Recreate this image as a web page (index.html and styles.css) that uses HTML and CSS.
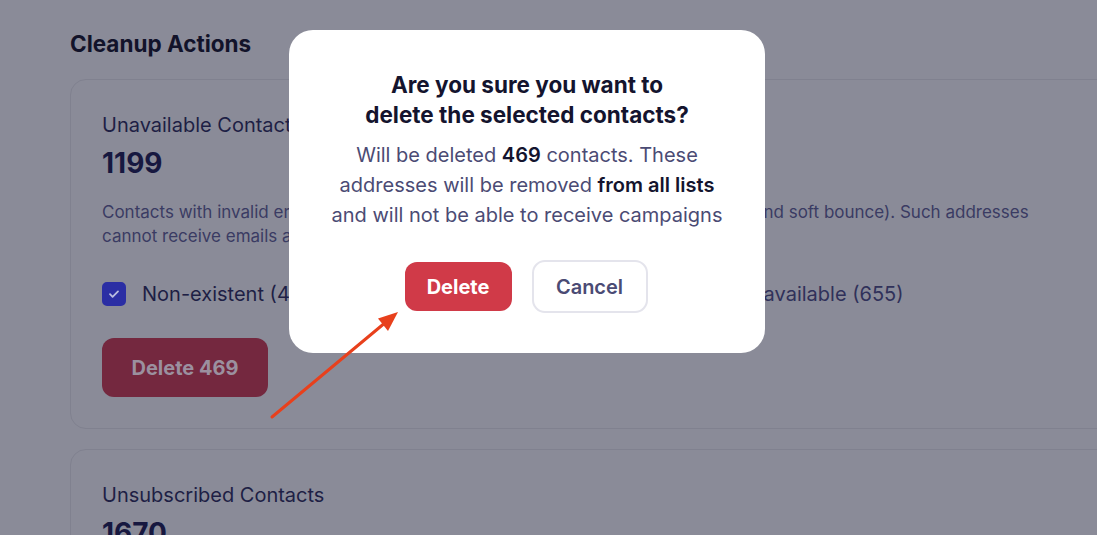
FILE: index.html
```html
<!DOCTYPE html>
<html>
<head>
<meta charset="utf-8">
<link rel="stylesheet" href="styles.css">
</head>
<body>
<div class="page">
  <h2 class="section-title">Cleanup Actions</h2>
  <div class="card">
    <h3 class="card-title">Unavailable Contacts</h3>
    <div class="card-count">1199</div>
    <p class="card-desc">Contacts with invalid email addresses or those that returned errors (hard bounce and soft bounce). Such addresses cannot receive emails and reduce your sender reputation.</p>
    <div class="options">
      <label class="option">
        <span class="checkbox checked"><svg width="14" height="14" viewBox="0 0 14 14"><path d="M3 7.2l2.6 2.6L11 4.4" fill="none" stroke="#b9bde0" stroke-width="1.8" stroke-linecap="round" stroke-linejoin="round"/></svg></span>
        <span>Non-existent (469)</span>
      </label>
      <label class="option second">
        <span class="checkbox"></span>
        <span>Temporarily unavailable (655)</span>
      </label>
    </div>
    <button class="btn-dim">Delete 469</button>
  </div>
  <div class="card">
    <h3 class="card-title">Unsubscribed Contacts</h3>
    <div class="card-count">1670</div>
  </div>
</div>

<div class="modal">
  <h2 class="modal-title">Are you sure you want to<br>delete the selected contacts?</h2>
  <p class="modal-text">Will be deleted <b>469</b> contacts. These<br>addresses will be removed <b>from all lists</b><br>and will not be able to receive campaigns</p>
  <div class="modal-actions">
    <button class="btn-delete">Delete</button>
    <button class="btn-cancel">Cancel</button>
  </div>
</div>

<svg class="arrow" width="1097" height="535" viewBox="0 0 1097 535">
  <line x1="272" y1="417" x2="386" y2="322" stroke="#e8401c" stroke-width="3" stroke-linecap="round"/>
  <polygon points="398,312 378,318.5 388,331" fill="#e8401c"/>
</svg>
</body>
</html>
```

FILE: styles.css
```css
* { box-sizing: border-box; }
html, body {
  margin: 0;
  padding: 0;
  width: 1097px;
  height: 535px;
  overflow: hidden;
  background: #8a8b98;
  font-family: Inter, "Noto Sans", sans-serif;
}
.page {
  padding: 30px 0 0 70px;
  width: 1097px;
  height: 535px;
  overflow: hidden;
}
.section-title {
  margin: 0 0 21px;
  font-size: 22.5px;
  line-height: 28px;
  font-weight: 700;
  color: #12132a;
}
.card {
  width: 1070px;
  border: 1px solid #80818f;
  border-radius: 16px;
  padding: 31px 31px 31px;
  margin-bottom: 20px;
}
.card-title {
  margin: 0;
  font-size: 20px;
  line-height: 28px;
  font-weight: 400;
  color: #1e1f45;
}
.card-count {
  margin-top: 7px;
  font-size: 28px;
  line-height: 34px;
  font-weight: 700;
  color: #171840;
}
.card-desc {
  margin: 20px 0 0;
  width: 940px;
  font-size: 17px;
  line-height: 24px;
  color: #3a3b63;
}
.options {
  display: flex;
  align-items: center;
  margin-top: 34px;
}
.option {
  display: flex;
  align-items: center;
  gap: 16px;
  font-size: 20px;
  line-height: 24px;
  color: #1e1f45;
}
.option.second {
  margin-left: 260px;
  color: #30315a;
}
.checkbox {
  width: 24px;
  height: 24px;
  border-radius: 5px;
  border: 2px solid #6d6e85;
  display: flex;
  align-items: center;
  justify-content: center;
}
.checkbox.checked {
  background: #2b2ea4;
  border-color: #2b2ea4;
}
.btn-dim {
  margin-top: 32px;
  width: 166px;
  height: 59px;
  border: none;
  border-radius: 12px;
  background: #74283f;
  color: #9b909f;
  font-family: inherit;
  font-size: 20px;
  font-weight: 700;
}
.modal {
  position: absolute;
  left: 289px;
  top: 30px;
  width: 476px;
  height: 323px;
  background: #fff;
  border-radius: 24px;
  padding: 40px 10px 40px;
  text-align: center;
}
.modal-title {
  margin: 0;
  font-size: 22.5px;
  line-height: 30px;
  font-weight: 700;
  color: #14142e;
}
.modal-text {
  margin: 10px 0 0;
  font-size: 20px;
  line-height: 30px;
  color: #4b4b74;
}
.modal-text b {
  color: #14142e;
  font-weight: 600;
}
.modal-actions {
  margin-top: 30px;
  display: flex;
  justify-content: center;
  align-items: center;
  gap: 20px;
  margin-left: -2px;
}
.btn-delete {
  width: 107px;
  height: 49px;
  border: none;
  border-radius: 12px;
  background: #d03a48;
  color: #fff;
  font-family: inherit;
  font-size: 20px;
  font-weight: 700;
}
.btn-cancel {
  width: 116px;
  height: 53px;
  border: 2px solid #e4e4ec;
  border-radius: 13px;
  background: #fff;
  color: #4b4b74;
  font-family: inherit;
  font-size: 20px;
  font-weight: 600;
}
.arrow {
  position: absolute;
  left: 0;
  top: 0;
  pointer-events: none;
}
```
